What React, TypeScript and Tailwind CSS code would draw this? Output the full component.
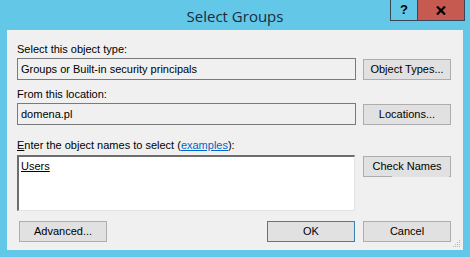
import React from 'react';

const ui = { fontFamily: '"Liberation Sans", Arial, sans-serif' };

function Btn({ children, primary, className = '' }: any) {
  return (
    <button
      className={`h-[21px] w-[88px] border bg-[#e1e1e1] text-[11px] text-black leading-none ${
        primary ? 'border-[#3c7fb1]' : 'border-[#adadad]'
      } ${className}`}
      style={ui}
    >
      {children}
    </button>
  );
}

function Field({ value }: { value: string }) {
  return (
    <div className="flex-1 h-[22px] border border-[#7a7a7a] bg-[#f0f0f0] flex items-center px-[3px] text-[11px] text-black">
      {value}
    </div>
  );
}

export default function App() {
  return (
    <div className="w-[470px] h-[257px] bg-[#63c8e8] flex flex-col overflow-hidden" style={ui}>
      {/* title bar */}
      <div className="relative h-[30px] flex justify-center items-start pt-[5px]">
        <span className="text-[15px] text-[#1b2b3c]" style={{ fontFamily: '"Open Sans", "Liberation Sans", sans-serif' }}>
          Select Groups
        </span>
        <div className="absolute right-[5px] top-0 flex h-[21px] border border-t-0 border-[#3a4656]">
          <div className="w-[27px] flex items-center justify-center font-bold text-[13px] text-black border-r border-[#3a4656]">
            ?
          </div>
          <div className="w-[46px] bg-[#c75a50] flex items-center justify-center">
            <svg width="10" height="9" viewBox="0 0 10 9">
              <path d="M1 0.5 L9 8.5 M9 0.5 L1 8.5" stroke="#000" strokeWidth="2.2" />
            </svg>
          </div>
        </div>
      </div>

      {/* client area */}
      <div className="relative mx-[7px] h-[220px] bg-[#f0f0f0] pl-[10px] pr-[12px] pt-[10px] text-[11px] text-black">
        <div className="h-[18px] leading-[18px]">Select this object type:</div>
        <div className="flex gap-[7px] items-start">
          <Field value="Groups or Built-in security principals" />
          <Btn className="mt-[1px]">Object Types...</Btn>
        </div>

        <div className="h-[18px] leading-[18px] mt-[5px]">From this location:</div>
        <div className="flex gap-[7px] items-start">
          <Field value="domena.pl" />
          <Btn className="mt-[1px]">Locations...</Btn>
        </div>

        <div className="h-[17px] leading-[17px] mt-[12px]">
          <span className="underline">E</span>nter the object names to select (
          <span className="text-[#0066cc] underline">examples</span>):
        </div>
        <div className="flex gap-[8px] items-start mt-[1px]">
          <div className="flex-1 h-[56px] bg-white border-t-2 border-l-2 border-t-[#6d6d6d] border-l-[#6d6d6d] border-b border-r border-b-[#e3e3e3] border-r-[#e3e3e3] px-[2px] pt-[1px]">
            <span className="underline">Users</span>
          </div>
          <div className="relative mt-[1px]">
            <Btn>Check Names</Btn>
            <div className="absolute left-[29px] right-[2px] bottom-0 h-[1px] bg-[#e1e1e1]" />
          </div>
        </div>

        <div className="flex items-center mt-[10px] pl-[2px]">
          <Btn className="h-[20px]">Advanced...</Btn>
          <div className="flex-1" />
          <Btn primary className="h-[20px] w-[73px]">OK</Btn>
          <Btn className="h-[20px] w-[73px] ml-[8px]">Cancel</Btn>
        </div>

        <svg className="absolute right-[2px] bottom-[2px]" width="8" height="8" viewBox="0 0 8 8">
          <g fill="#b8b8b8">
            <rect x="6" y="0" width="1" height="1" />
            <rect x="4" y="2" width="1" height="1" />
            <rect x="6" y="2" width="1" height="1" />
            <rect x="2" y="4" width="1" height="1" />
            <rect x="4" y="4" width="1" height="1" />
            <rect x="6" y="4" width="1" height="1" />
            <rect x="0" y="6" width="1" height="1" />
            <rect x="2" y="6" width="1" height="1" />
            <rect x="4" y="6" width="1" height="1" />
            <rect x="6" y="6" width="1" height="1" />
          </g>
        </svg>
      </div>
    </div>
  );
}
